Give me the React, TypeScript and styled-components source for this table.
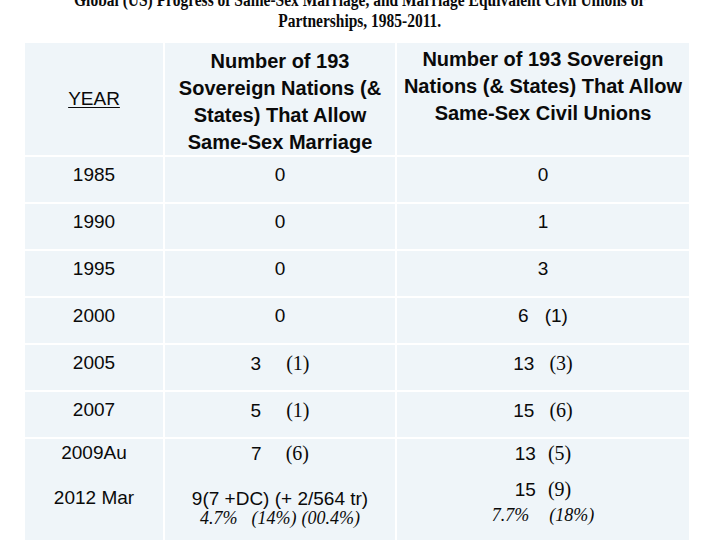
import React from "react";
import styled, { createGlobalStyle } from "styled-components";

const GlobalStyle = createGlobalStyle`
  html, body { margin: 0; padding: 0; background: #ffffff; }
  body { font-family: "Liberation Sans", Arial, sans-serif; color: #0a0a0a; }
`;

const Page = styled.div`
  width: 720px;
  height: 540px;
  overflow: hidden;
`;

const Title = styled.h1`
  margin: -10px 0 0;
  font-family: "Liberation Serif", "Times New Roman", serif;
  font-weight: bold;
  font-size: 18px;
  line-height: 21px;
  text-align: center;
  color: #0a0a0a;
`;

const TitleLine = styled.span`
  display: block;
  white-space: nowrap;
  transform: scaleX(0.86);
  transform-origin: 358px 50%;
`;

const Table = styled.div`
  margin: 11px 0 0 25px;
  width: 664px;
  display: grid;
  grid-template-columns: 138px 230px 292px;
  grid-template-rows: 112px repeat(6, 45px) 120px;
  gap: 2px;
`;

const Cell = styled.div<{ $head?: boolean; $top?: number }>`
  background: #eff5f9;
  text-align: center;
  font-size: ${(p) => (p.$head ? "20px" : "19px")};
  font-weight: ${(p) => (p.$head ? "bold" : "normal")};
  line-height: ${(p) => (p.$head ? "27px" : "24px")};
  padding-top: ${(p) => p.$top ?? 6}px;
  box-sizing: border-box;
  white-space: nowrap;
`;

const YearHead = styled(Cell)`
  display: flex;
  align-items: center;
  justify-content: center;
  padding-top: 0;
  font-weight: normal;
  font-size: 19px;
  text-decoration: underline;
  text-underline-offset: 2px;
`;

const Line = styled.div<{ $mt?: number }>`
  margin-top: ${(p) => p.$mt ?? 0}px;
`;

const Paren = styled.span<{ $gap: number }>`
  display: inline-block;
  margin-left: ${(p) => p.$gap}px;
  font-family: "Liberation Serif", "Times New Roman", serif;
  font-size: 20px;
`;

const PlainParen = styled.span<{ $gap: number }>`
  display: inline-block;
  margin-left: ${(p) => p.$gap}px;
`;

const Note = styled.div<{ $mt?: number }>`
  margin-top: ${(p) => p.$mt ?? 0}px;
  font-family: "Liberation Serif", "Times New Roman", serif;
  font-style: italic;
  font-size: 18px;
  line-height: 20px;
`;

const NoteBit = styled.span<{ $gap?: number }>`
  display: inline-block;
  margin-left: ${(p) => p.$gap ?? 0}px;
`;

type Val = { n: string; p?: string; gap?: number; serif?: boolean };

const V: React.FC<{ v: Val }> = ({ v }) => (
  <>
    {v.n}
    {v.p &&
      (v.serif ? (
        <Paren $gap={v.gap ?? 0}>{v.p}</Paren>
      ) : (
        <PlainParen $gap={v.gap ?? 0}>{v.p}</PlainParen>
      ))}
  </>
);

const rows: { year: string; a: Val; b: Val }[] = [
  { year: "1985", a: { n: "0" }, b: { n: "0" } },
  { year: "1990", a: { n: "0" }, b: { n: "1" } },
  { year: "1995", a: { n: "0" }, b: { n: "3" } },
  { year: "2000", a: { n: "0" }, b: { n: "6", p: "(1)", gap: 16 } },
  {
    year: "2005",
    a: { n: "3", p: "(1)", gap: 25, serif: true },
    b: { n: "13", p: "(3)", gap: 15, serif: true },
  },
  {
    year: "2007",
    a: { n: "5", p: "(1)", gap: 25, serif: true },
    b: { n: "15", p: "(6)", gap: 15, serif: true },
  },
];

export default function App() {
  return (
    <Page>
      <GlobalStyle />
      <Title>
        <TitleLine>
          Global (US) Progress of Same-Sex Marriage, and Marriage Equivalent Civil Unions or
        </TitleLine>
        <TitleLine>Partnerships, 1985-2011.</TitleLine>
      </Title>
      <Table>
        <YearHead>YEAR</YearHead>
        <Cell $head $top={5}>
          Number of 193
          <br />
          Sovereign Nations (&amp;
          <br />
          States) That Allow
          <br />
          Same-Sex Marriage
        </Cell>
        <Cell $head $top={3}>
          Number of 193 Sovereign
          <br />
          Nations (&amp; States) That Allow
          <br />
          Same-Sex Civil Unions
        </Cell>

        {rows.map((r) => (
          <React.Fragment key={r.year}>
            <Cell>{r.year}</Cell>
            <Cell>
              <V v={r.a} />
            </Cell>
            <Cell>
              <V v={r.b} />
            </Cell>
          </React.Fragment>
        ))}

        <Cell $top={2}>
          <Line>2009Au</Line>
          <Line $mt={21}>2012 Mar</Line>
        </Cell>
        <Cell $top={2}>
          <Line>
            <V v={{ n: "7", p: "(6)", gap: 24, serif: true }} />
          </Line>
          <Line $mt={21}>9(7 +DC) (+ 2/564 tr)</Line>
          <Note $mt={-3}>
            <NoteBit>4.7%</NoteBit>
            <NoteBit $gap={14}>(14%)</NoteBit>
            <NoteBit $gap={5}>(00.4%)</NoteBit>
          </Note>
        </Cell>
        <Cell $top={2}>
          <Line>
            <V v={{ n: "13", p: "(5)", gap: 12, serif: true }} />
          </Line>
          <Line $mt={11}>
            <V v={{ n: "15", p: "(9)", gap: 12, serif: true }} />
          </Line>
          <Note $mt={3}>
            <NoteBit>7.7%</NoteBit>
            <NoteBit $gap={20}>(18%)</NoteBit>
          </Note>
        </Cell>
      </Table>
    </Page>
  );
}
